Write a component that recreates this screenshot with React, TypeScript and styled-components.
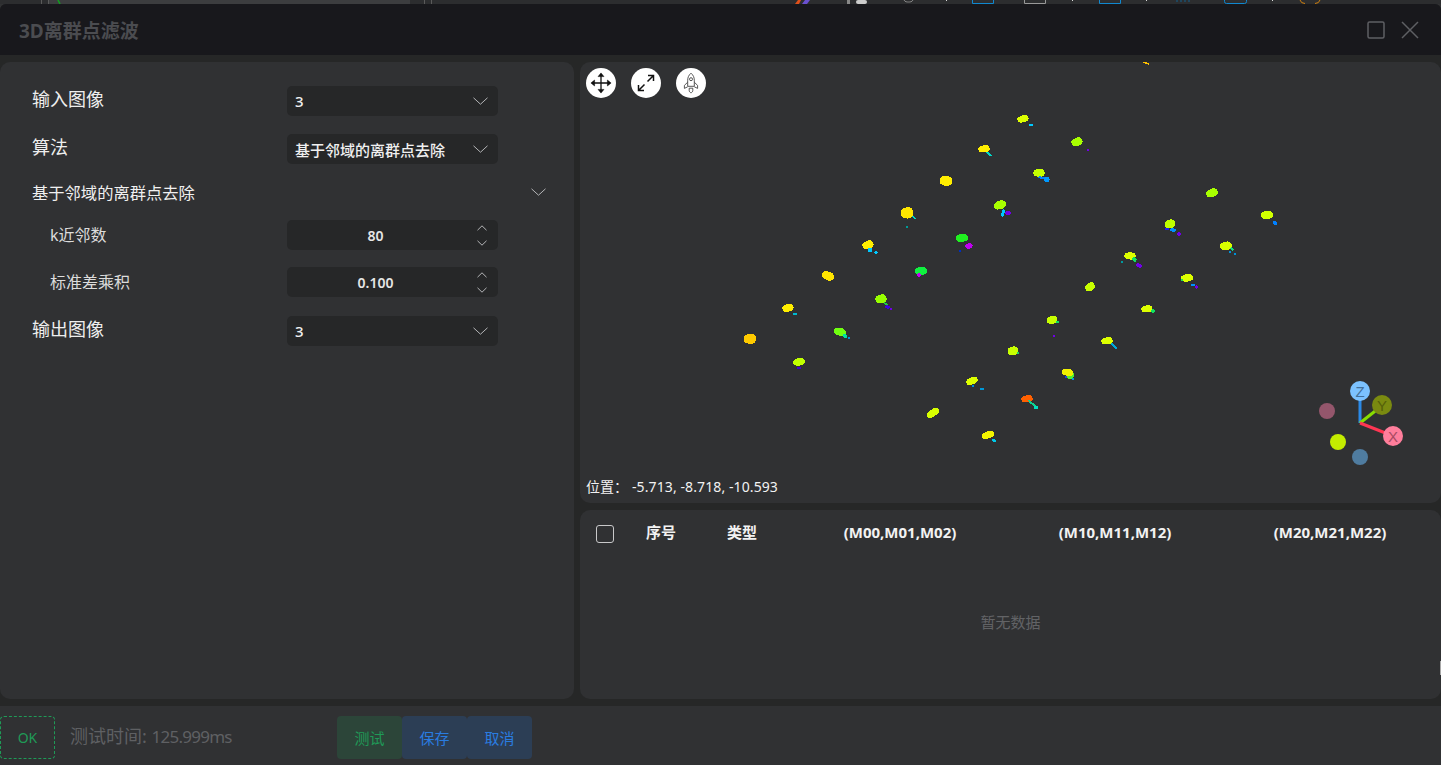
import React from "react";
import styled, { createGlobalStyle } from "styled-components";

const FONT = `"Noto Sans", "Noto Sans CJK SC", sans-serif`;

const Global = createGlobalStyle`
  html, body { margin: 0; padding: 0; background: #303133; }
  body { font-family: ${FONT}; overflow: hidden; }
  * { box-sizing: border-box; }
`;

const Page = styled.div`
  width: 1441px;
  height: 765px;
  display: flex;
  flex-direction: column;
  overflow: hidden;
  background: #303133;
`;
const BackStrip = styled.svg`
  display: block;
  width: 1441px;
  height: 4px;
  flex: none;
`;
const Dialog = styled.div`
  flex: 1;
  display: flex;
  flex-direction: column;
  background: #262727;
  border-radius: 6px 6px 0 0;
  overflow: hidden;
`;
const Header = styled.header`
  height: 51px;
  flex: none;
  background: #18181c;
  display: flex;
  align-items: center;
  justify-content: space-between;
  padding: 0 22px 0 19px;
`;
const Title = styled.h1`
  margin: 2px 0 0;
  font-size: 19px;
  font-weight: 700;
  line-height: 26px;
  color: #4b4c50;
`;
const WindowButtons = styled.div`
  display: flex;
  align-items: center;
  gap: 16px;
  color: #5e5f63;
`;
const Body = styled.main`
  height: 651px;
  flex: none;
  padding: 7px 0;
  display: grid;
  grid-template-columns: 574px 861px;
  column-gap: 6px;
`;
const Panel = styled.section`
  background: #303133;
  border-radius: 10px;
`;
const FormPanel = styled(Panel)`
  padding: 24px 0 0 32px;
  display: flex;
  flex-direction: column;
`;
const Row = styled.div<{ $top?: number; $indent?: boolean }>`
  display: flex;
  align-items: center;
  height: 30px;
  margin-top: ${(p) => p.$top ?? 0}px;
  padding-left: ${(p) => (p.$indent ? 18 : 0)}px;
`;
const Label = styled.label<{ $indent?: boolean }>`
  width: ${(p) => (p.$indent ? 237 : 255)}px;
  flex: none;
  color: ${(p) => (p.$indent ? "#dcdcdc" : "#eeeeee")};
  font-size: ${(p) => (p.$indent ? 16 : 18)}px;
  line-height: 24px;
  padding-bottom: ${(p) => (p.$indent ? 0 : 4)}px;
`;
const Select = styled.div`
  width: 211px;
  height: 30px;
  background: #262728;
  border-radius: 5px;
  display: flex;
  align-items: center;
  justify-content: space-between;
  padding: 0 10px 0 8px;
  color: #f0f0f0;
  font-size: 15px;
  font-weight: 500;
  white-space: nowrap;
`;
const SectionRow = styled.div`
  width: 514px;
  height: 24px;
  margin-top: 16px;
  margin-bottom: 1px;
  display: flex;
  align-items: center;
  justify-content: space-between;
  color: #f0f0f0;
  font-size: 16.3px;
`;
const Spinner = styled.div`
  width: 211px;
  height: 30px;
  background: #262728;
  border-radius: 5px;
  display: flex;
  align-items: center;
  position: relative;
`;
const SpinValue = styled.span`
  flex: 1;
  padding-right: 34px;
  text-align: center;
  color: #e6e6e6;
  font-size: 14px;
  font-weight: 600;
`;
const SpinArrows = styled.div`
  position: absolute;
  right: 11px;
  top: 5px;
  height: 21px;
  display: flex;
  flex-direction: column;
  justify-content: space-between;
`;
const RightCol = styled.div`
  display: grid;
  grid-template-rows: 441px 189px;
  row-gap: 7px;
`;
const Canvas = styled(Panel)`
  position: relative;
  overflow: hidden;
`;
const Cloud = styled.svg`
  position: absolute;
  inset: 0;
  width: 861px;
  height: 441px;
`;
const Tools = styled.div`
  position: absolute;
  left: 6px;
  top: 6px;
  display: flex;
  gap: 15px;
`;
const ToolButton = styled.button`
  width: 30px;
  height: 30px;
  padding: 0;
  border: 0;
  border-radius: 50%;
  background: #ffffff;
  display: flex;
  align-items: center;
  justify-content: center;
`;
const Position = styled.div`
  position: absolute;
  left: 6px;
  bottom: 6px;
  color: #f2f2f2;
  font-size: 14px;
  line-height: 20px;
`;
const PositionValue = styled.span`
  margin-left: 4px;
  letter-spacing: 0.1px;
`;
const TablePanel = styled(Panel)`
  position: relative;
  display: flex;
  flex-direction: column;
`;
const TableHead = styled.div`
  display: grid;
  grid-template-columns: 50px 81px 65.5px 215px 215px 215px;
  align-items: center;
  height: 43px;
  padding: 0 0 0 16px;
  color: #f2f2f2;
  font-size: 15px;
  font-weight: 700;
`;
const MatrixCell = styled.div<{ $col: number }>`
  grid-column: ${(p) => p.$col};
  text-align: center;
`;
const Check = styled.span`
  width: 18px;
  height: 18px;
  margin-top: 4px;
  border: 1.5px solid #c8c8ca;
  border-radius: 3px;
`;
const Empty = styled.div`
  flex: 1;
  display: flex;
  align-items: center;
  justify-content: center;
  padding-bottom: 9px;
  color: #626366;
  font-size: 15px;
`;
const ScrollThumb = styled.span`
  position: absolute;
  right: 0;
  top: 151px;
  width: 1px;
  height: 14px;
  background: #a8a8a8;
`;
const Footer = styled.footer`
  flex: 1;
  background: #303133;
  display: flex;
  align-items: flex-start;
  padding-top: 10px;
`;
const OkBox = styled.div`
  width: 55px;
  height: 43px;
  border: 1px dashed #1f9a57;
  border-radius: 4px;
  display: flex;
  align-items: center;
  justify-content: center;
  color: #1f9a57;
  font-size: 14px;
`;
const TimeText = styled.span`
  width: 282px;
  padding-left: 15px;
  height: 43px;
  line-height: 41px;
  color: #5f6063;
  font-size: 18px;
  white-space: nowrap;
`;
const TimeValue = styled.span`
  font-size: 17px;
  letter-spacing: -0.75px;
`;
const ActionGroup = styled.div`
  display: flex;
`;
const Action = styled.button<{ $tone: "green" | "blue" }>`
  width: 65px;
  height: 43px;
  padding: 0;
  border: 0;
  border-radius: 4px;
  font-family: ${FONT};
  font-size: 15px;
  background: ${(p) => (p.$tone === "green" ? "#2c4539" : "#2c3e55")};
  color: ${(p) => (p.$tone === "green" ? "#1f9a57" : "#2a7ce0")};
`;

type B = [number, number, number, number, number, string];
const Y = "#ffee00", L = "#ddff00", G = "#a8ff00", T = "#00d8c8", C = "#00c8ff", U = "#0080ff", V = "#7000e8", M = "#c000f0";
const blobs: B[] = [
  [1146, 63, 3, 0.7, 20, "#ffc000"],
  [1023, 119, 5, 3, -5, L], [1031, 125, 1.8, 1.2, 0, C],
  [984, 149, 5, 3, 0, Y], [989, 154, 3, 0.9, 35, T],
  [946, 181, 5.5, 4.2, 20, Y],
  [907, 213, 5.5, 4.8, 10, "#ffe600"], [914, 217.5, 2, 0.8, 55, T], [907, 227, 0.9, 0.9, 0, "#009a98"],
  [868, 245, 5, 3.5, -10, Y], [870, 250, 2, 1.8, 0, C], [876, 252.5, 1.5, 1.1, 0, C],
  [828, 276, 5.5, 3.6, 30, "#ffe400"],
  [1077, 142, 5, 3.5, -10, G], [1088, 150, 1.4, 1, 0, V],
  [1039, 173, 5, 3.3, 10, "#c4ff00"], [1043, 178, 4.5, 1.1, 10, U], [1047, 179.5, 2.2, 2.2, 0, "#0098ff"],
  [1000, 205, 5.5, 3.6, -10, G], [1003, 213, 1.3, 3, 10, C], [1008, 213, 2.8, 1.5, 0, V],
  [962, 238, 5.5, 3.3, 0, "#20f020"], [969, 246, 3, 2.2, -10, M], [960, 251, 0.8, 1, 0, "#0030c0"],
  [921, 271, 5.5, 3.5, 5, "#10f040"], [919, 275, 2.2, 1.4, 0, M],
  [1212, 193, 5.3, 3.5, -10, G],
  [1267, 215, 5.5, 3.5, 5, "#d0ff00"], [1275, 223, 2.2, 1.6, 30, U],
  [1170, 224, 4.5, 3.6, 0, "#c0ff00"], [1167, 229, 1.8, 1.2, 0, "#2020f0"], [1173, 230, 2.5, 1.4, 10, "#0090ff"], [1179, 234, 1.6, 1.4, 0, V],
  [1226, 246, 5.3, 3.5, 0, "#d8ff00"], [1232, 249, 1.6, 1.1, 30, "#10e080"], [1230, 252, 0.8, 1.4, 0, "#0090d8"], [1235, 254, 1.3, 0.9, 0, "#0090d8"],
  [1130, 256, 5, 3, 10, L], [1134.5, 259.5, 2, 1.7, 40, "#10e060"], [1122, 262, 0.9, 0.9, 0, "#009aa0"], [1139, 265.5, 2.7, 1.7, 20, V],
  [1187, 278, 5.3, 3.2, 0, L], [1182, 280, 1, 1, 0, "#20e050"], [1193, 285, 2.2, 1.3, 0, "#0090ff"], [1196.5, 287, 1.3, 1.3, 0, V],
  [1090, 287, 4.6, 3.4, -15, "#c8ff00"],
  [1147, 309, 5, 3, 5, L], [1153, 311, 1.4, 1.6, 0, "#10e060"],
  [1052, 320, 4.8, 3.3, 0, "#c8ff00"], [1057.5, 322, 1.5, 0.9, 20, "#10e060"], [1054, 336, 1.1, 1, 0, V],
  [1107, 341, 5, 3, 0, L], [1114, 346, 3.2, 1, 45, "#00a8d8"],
  [881, 299, 5, 3.7, 0, "#98ff00"], [886, 304, 2, 0.9, 30, "#20d040"], [887.5, 307, 2, 1.4, 20, "#4000e0"], [891, 309, 1.1, 1.1, 0, V],
  [788, 308, 5, 3.2, -5, Y], [795, 314, 1.5, 1.1, 0, "#00b8d0"],
  [840, 332, 5.5, 3.2, 20, "#70ff10"], [845, 336, 2.2, 1.8, 30, "#00e0a0"], [849, 338, 1.1, 0.9, 0, "#0090e0"],
  [750, 339, 5.4, 4.2, 15, "#ffca00"],
  [799, 362, 5.2, 3.2, 0, "#c0ff00"], [799, 368, 1.5, 1, 0, "#4000d0"],
  [1013, 351, 4.6, 3.8, 10, "#c8ff00"], [1018, 353, 1.3, 0.9, 20, "#20d060"],
  [972, 381, 5.4, 3, -15, L], [973, 386, 1, 1, 0, "#0090e0"], [982, 389, 1.8, 1.1, 10, "#0098d8"],
  [1070, 375, 3.2, 3.2, 0, "#50f030"], [1067.5, 372.5, 5, 3, 20, "#f0f000"], [1066, 377, 1.3, 1, 0, "#2040e0"], [1073, 379, 1.2, 1, 0, "#0098e0"],
  [1027, 399, 5, 3, 0, "#ff6000"], [1032.5, 404, 5, 0.9, 42, "#10d090"], [1036, 407.5, 1.7, 1.7, 0, "#00e0c0"],
  [933, 413, 6, 3, -30, "#d8ff00"],
  [988, 435, 5.6, 3, -12, "#f4f400"], [994, 440.5, 1.9, 1, 10, "#00c8e8"],
];

const Chevron = ({ up, small }: { up?: boolean; small?: boolean }) => {
  const w = small ? 10 : 15;
  const h = small ? 6 : 8;
  const d = up ? `M0.5 ${h - 0.8}L${w / 2} 0.8L${w - 0.5} ${h - 0.8}` : `M0.5 0.8L${w / 2} ${h - 0.8}L${w - 0.5} 0.8`;
  return (
    <svg width={w} height={h} viewBox={`0 0 ${w} ${h}`} fill="none" stroke="#b4b5b7" strokeWidth="1">
      <path d={d} />
    </svg>
  );
};

const MoveIcon = () => (
  <svg width="22" height="22" viewBox="0 0 24 24" fill="#111" stroke="#111" strokeWidth="1.4">
    <path d="M12 3v18M3 12h18" fill="none" />
    <path d="M12 1 8.800 5h6.400zM12 23l-3.200-4h6.400zM1 12l4-3.200v6.400zM23 12l-4-3.200v6.400z" strokeWidth="0.6" strokeLinejoin="round" />
  </svg>
);
const Expand = () => (
  <svg width="18" height="18" viewBox="0 0 18 18" fill="none" stroke="#111" strokeWidth="1.5">
    <path d="M10.500 7.500 16.500 1.500M11 1.500h5.500V7M7.500 10.500l-6 6M1.500 11v5.500H7" />
  </svg>
);
const Rocket = () => (
  <svg width="18" height="22" viewBox="0 0 18 22" fill="none" stroke="#444" strokeWidth="0.9" strokeLinejoin="round">
    <path d="M9 1.200c2.400 2 3.300 4.400 3.300 7v6.100H5.700V8.200c0-2.600.9-5 3.300-7z" />
    <circle cx="9" cy="7.200" r="1.500" />
    <path d="M5.700 10.200 2.400 13.400v3l3.300-1.600M12.300 10.200l3.300 3.200v3l-3.300-1.600" />
    <path d="M7.200 16.200v2.200c0 1.200.9 2.200 1.800 2.400.9-.2 1.800-1.200 1.800-2.400v-2.200z" />
  </svg>
);

const Gizmo = () => (
  <g fontFamily={`"Liberation Sans", sans-serif`} fontSize="15" textAnchor="middle">
    <circle cx="1327" cy="411" r="8" fill="#94566c" />
    <circle cx="1338" cy="442" r="8" fill="#c4ec00" />
    <circle cx="1360" cy="457" r="8" fill="#4f7ca0" />
    <line x1="1360" y1="423" x2="1360" y2="395" stroke="#2a8ae8" strokeWidth="3" />
    <line x1="1360" y1="423" x2="1379" y2="408" stroke="#88dd00" strokeWidth="3" />
    <line x1="1360" y1="423" x2="1388" y2="434" stroke="#ff3653" strokeWidth="3" />
    <circle cx="1382" cy="405" r="10" fill="#7a8a10" />
    <text x="1382" y="410.500" fill="#55600a">Y</text>
    <circle cx="1360" cy="391" r="10" fill="#7cc2ff" />
    <text x="1360" y="396.500" fill="#43709a">Z</text>
    <circle cx="1393" cy="436" r="10" fill="#ff7e9c" />
    <text x="1393" y="441.500" fill="#a84a62">X</text>
  </g>
);

const Blob = ({ b }: { b: B }) => {
  const [x, y, rx, ry, r, c] = b;
  const big = rx >= 4;
  const k = big ? 1.15 : 1.2;
  return (
    <g transform={`rotate(${r} ${x} ${y})`} fill={c} shapeRendering="crispEdges">
      <ellipse cx={x} cy={y} rx={rx * k} ry={ry * k} />
      {big && <ellipse cx={x + rx * 0.25} cy={y - ry * 0.15} rx={rx * 0.85} ry={ry * 1.15} />}
      {big && <ellipse cx={x - rx * 0.35} cy={y + ry * 0.25} rx={rx * 0.75} ry={ry * 0.9} />}
    </g>
  );
};

export default function App() {
  return (
    <Page>
      <Global />
      <BackStrip viewBox="0 0 1441 4">
        <rect width="1441" height="4" fill="#2c2d2f" />
        <rect x="48" width="362" height="4" fill="#3c3d3f" />
        <rect x="41" width="1" height="4" fill="#5a5a5a" />
        <rect x="48" width="1" height="4" fill="#5a5a5a" />
        <rect x="424" width="1" height="4" fill="#5a5a5a" />
        <rect x="431" width="1" height="4" fill="#5a5a5a" />
        <path d="M58 0l2 4" stroke="#10a020" strokeWidth="1.500" />
        <path d="M795 4l3-4h3l-2 4z" fill="#e0501a" />
        <path d="M802 4l3-4h5l-3 4z" fill="#6a50d0" />
        <rect x="847" width="3" height="4" fill="#888" />
        <rect x="856" width="11" height="4" rx="2" fill="#ccc" />
        <path d="M904 0c1 2 3 2 4.500 2s3.500 0 4.500-2" stroke="#888" fill="none" />
        <path d="M972.500 0v3.500h21V0" stroke="#1088d0" fill="none" />
        <path d="M1024.500 0v3.500h21V0" stroke="#999" fill="none" />
        <path d="M1099.500 0v3.500h21V0" stroke="#1088d0" fill="none" />
        <path d="M1176 1h14" stroke="#10608f" strokeDasharray="2 2" fill="none" />
        <path d="M1224.500 0v1.500q0 2 2 2h18q2 0 2-2V0" stroke="#1088d0" fill="none" />
        <path d="M1300 0q1 3.500 5 3.500M1320 0q-1 3.500-5 3.500" stroke="#d08010" fill="none" />
        <rect x="946" width="1" height="1" fill="#ddd" />
        <rect x="1072" width="1" height="1" fill="#ddd" />
        <rect x="1146" width="1" height="1" fill="#ddd" />
        <rect x="1272" width="1" height="1" fill="#ddd" />
      </BackStrip>
      <Dialog>
        <Header>
          <Title>3D离群点滤波</Title>
          <WindowButtons>
            <svg width="18" height="18" viewBox="0 0 18 18" fill="none" stroke="currentColor" strokeWidth="1.500">
              <rect x="1" y="1" width="16" height="16" rx="1.500" />
            </svg>
            <svg width="18" height="18" viewBox="0 0 18 18" fill="none" stroke="currentColor" strokeWidth="1.500">
              <path d="M1 1l16 16M17 1 1 17" />
            </svg>
          </WindowButtons>
        </Header>
        <Body>
          <FormPanel>
            <Row>
              <Label>输入图像</Label>
              <Select>3<Chevron /></Select>
            </Row>
            <Row $top={18}>
              <Label>算法</Label>
              <Select>基于邻域的离群点去除<Chevron /></Select>
            </Row>
            <SectionRow>
              基于邻域的离群点去除
              <Chevron />
            </SectionRow>
            <Row $top={15} $indent>
              <Label $indent>k近邻数</Label>
              <Spinner>
                <SpinValue>80</SpinValue>
                <SpinArrows>
                  <Chevron up small />
                  <Chevron small />
                </SpinArrows>
              </Spinner>
            </Row>
            <Row $top={17} $indent>
              <Label $indent>标准差乘积</Label>
              <Spinner>
                <SpinValue>0.100</SpinValue>
                <SpinArrows>
                  <Chevron up small />
                  <Chevron small />
                </SpinArrows>
              </Spinner>
            </Row>
            <Row $top={19}>
              <Label>输出图像</Label>
              <Select>3<Chevron /></Select>
            </Row>
          </FormPanel>
          <RightCol>
            <Canvas>
              <Cloud viewBox="580 62 861 441">
                {blobs.map((b, i) => (
                  <Blob key={i} b={b} />
                ))}
                <Gizmo />
              </Cloud>
              <Tools>
                <ToolButton><MoveIcon /></ToolButton>
                <ToolButton><Expand /></ToolButton>
                <ToolButton><Rocket /></ToolButton>
              </Tools>
              <Position>位置：<PositionValue>-5.713, -8.718, -10.593</PositionValue></Position>
            </Canvas>
            <TablePanel>
              <TableHead>
                <Check />
                <span>序号</span>
                <span>类型</span>
                <MatrixCell $col={4}>(M00,M01,M02)</MatrixCell>
                <MatrixCell $col={5}>(M10,M11,M12)</MatrixCell>
                <MatrixCell $col={6}>(M20,M21,M22)</MatrixCell>
              </TableHead>
              <Empty>暂无数据</Empty>
              <ScrollThumb />
            </TablePanel>
          </RightCol>
        </Body>
        <Footer>
          <OkBox>OK</OkBox>
          <TimeText>测试时间: <TimeValue>125.999ms</TimeValue></TimeText>
          <ActionGroup>
            <Action $tone="green">测试</Action>
            <Action $tone="blue">保存</Action>
            <Action $tone="blue">取消</Action>
          </ActionGroup>
        </Footer>
      </Dialog>
    </Page>
  );
}
